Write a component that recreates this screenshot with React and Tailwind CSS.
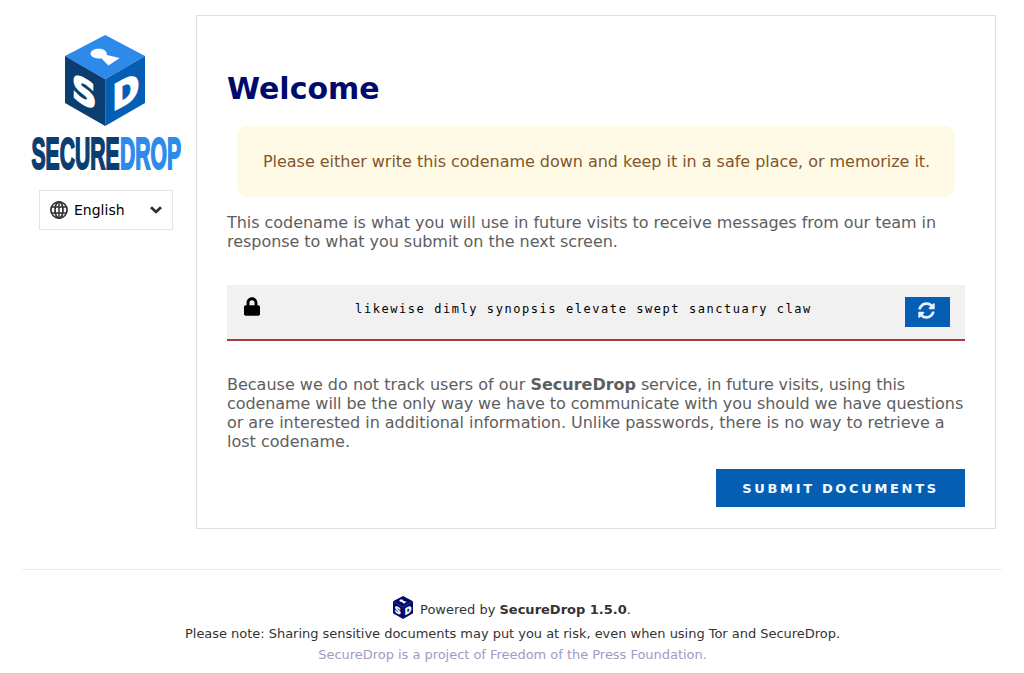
import React from "react";
import { FaLock, FaSyncAlt } from "react-icons/fa";

function Cube({ className, top, left, right }) {
  return (
    <svg className={className} viewBox="135 30 241 272" preserveAspectRatio="none" aria-hidden="true">
      <path d="M256 30 376 93 256 162 135 93Z" fill={top} />
      <path d="M135 93 256 162V302L135 233Z" fill={left} />
      <path d="M376 93 256 162V302L376 233Z" fill={right} />
      <path d="M245 100C228 102 212 95 212 86C212 77 223 71 237 71C252 71 263 79 261 90L300 99L266 121Z" fill="#fff" />
      <g
        fill="#fff"
        stroke="#fff"
        strokeWidth="5"
        fontFamily="'DejaVu Sans', sans-serif"
        fontWeight="700"
        fontSize="100"
      >
        <text transform="matrix(1.02 .55 0 1.03 156 217)">S</text>
        <text transform="matrix(.97 -.51 0 1.05 278 258)">D</text>
      </g>
    </svg>
  );
}

function Wordmark() {
  return (
    <svg className="mt-[11px] block h-[35px] w-[152px] overflow-visible" viewBox="0 0 152 35">
      <g fontFamily="'Liberation Sans Narrow', 'Liberation Sans', sans-serif" fontWeight="700" fontSize="44" strokeWidth="2">
        <text x="0.5" y="32" textLength="88" lengthAdjust="spacingAndGlyphs" fill="#0a3e70" stroke="#0a3e70">SECURE</text>
        <text x="89" y="32" textLength="61" lengthAdjust="spacingAndGlyphs" fill="#2d8aea" stroke="#2d8aea">DROP</text>
      </g>
    </svg>
  );
}

function Globe() {
  return (
    <svg className="size-[18px]" viewBox="0 0 18 18" fill="none" stroke="#303030" strokeWidth="1.7" aria-hidden="true">
      <circle cx="9" cy="9" r="8.1" />
      <ellipse cx="9" cy="9" rx="4" ry="8.1" />
      <path d="M9 1V17M2 6H16M2 12H16" strokeWidth="1.5" />
    </svg>
  );
}

export default function App() {
  return (
    <div className="h-[673px] w-[1024px] overflow-hidden bg-white pt-[15px] font-['DejaVu_Sans',sans-serif]">
      <div className="flex">
        <aside className="w-[196px] shrink-0 pt-5">
          <a className="ml-[31px] flex w-[152px] flex-col">
            <Cube className="ml-[34px] h-[91px] w-[80px]" top="#2d8aea" left="#0a3e70" right="#045fb4" />
            <Wordmark />
          </a>
          <button className="mt-[18px] ml-[39px] flex h-10 w-[134px] items-center border border-[#e5e5e5] pr-[10px] pl-[10px] text-[14px] text-black">
            <Globe />
            <span className="ml-[6px]">English</span>
            <svg className="ml-auto h-[8px] w-[12px]" viewBox="0 0 12 8" fill="none" stroke="#303030" strokeWidth="2.8" aria-hidden="true">
              <path d="M1 1.2 6 5.9 11 1.2" />
            </svg>
          </button>
        </aside>

        <main className="h-[514px] w-[800px] border border-[#dfdfdf] px-[30px] pt-[55px] text-[16px] leading-[19px] text-[#5e5e5e]">
          <h1 className="text-[30px] leading-[35px] font-bold text-[#000a6b]">Welcome</h1>
          <div className="mx-[10px] mt-5 flex h-[71px] items-center rounded-[10px] bg-[#fffae5] pl-[26px] text-[#82552d]">
            <p className="tracking-[-0.03px]">Please either write this codename down and keep it in a safe place, or memorize it.</p>
          </div>
          <p className="mt-4 tracking-[-0.045px]">
            This codename is what you will use in future visits to receive messages from our team in response to what you submit on the next screen.
          </p>
          <div className="mt-[34px] flex h-[56px] items-start border-b-2 border-[#af373f] bg-[#f1f1f1] pr-[15px] pl-[17px]">
            <FaLock className="mt-[12px] h-[19px] w-[16px] text-black" />
            <p className="mt-[15px] flex-1 pl-[2px] text-center font-['DejaVu_Sans_Mono',monospace] text-[12px] leading-[18px] tracking-[1.56px] text-black">
              likewise dimly synopsis elevate swept sanctuary claw
            </p>
            <button aria-label="Refresh codename" className="mt-3 flex h-[30px] w-[45px] justify-center bg-[#045fb4] pt-[5px] pr-[3px] text-[#e6f2ff]">
              <FaSyncAlt className="size-[17px]" />
            </button>
          </div>
          <p className="mt-[34px] whitespace-nowrap">
            Because we do not track users of our <strong className="font-bold">SecureDrop</strong>
            <span className="tracking-[-0.15px]"> service, in future visits, using this</span>
            <br />
            <span className="tracking-[-0.075px]">codename will be the only way we have to communicate with you should we have questions</span>
            <br />
            <span className="tracking-[-0.035px]">or are interested in additional information. Unlike passwords, there is no way to retrieve a</span>
            <br />
            lost codename.
          </p>
          <div className="mt-[18px] flex justify-end">
            <button className="h-[38px] w-[249px] bg-[#045fb4] text-[13px] font-bold tracking-[2.66px] text-[#f5faff]">SUBMIT DOCUMENTS</button>
          </div>
        </main>
      </div>

      <footer className="mx-[22px] mt-10 border-t border-[#eeeeee] pt-[26px] text-center text-[13px] text-[#333]">
        <p className="flex h-[24px] items-start justify-center leading-[24px]">
          <Cube className="mr-[7px] h-[23px] w-[20px]" top="#000a6b" left="#000a6b" right="#000a6b" />
          <span className="pt-[2px]">Powered by <strong className="font-bold">SecureDrop 1.5.0</strong>.</span>
        </p>
        <p className="mt-[3px] pl-px leading-[22px] tracking-[-0.03px]">Please note: Sharing sensitive documents may put you at risk, even when using Tor and SecureDrop.</p>
        <p className="pl-px leading-[20px] tracking-[-0.03px] text-[#a09bc4]">SecureDrop is a project of Freedom of the Press Foundation.</p>
      </footer>
    </div>
  );
}
